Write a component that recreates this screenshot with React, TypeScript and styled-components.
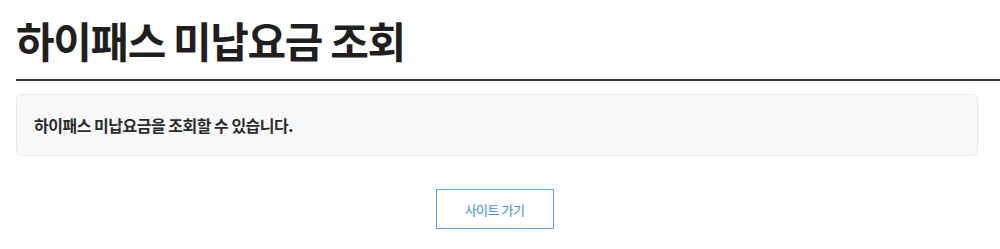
import React from "react";
import styled, { createGlobalStyle } from "styled-components";

const GlobalStyle = createGlobalStyle`
  html, body {
    margin: 0;
    padding: 0;
    background: #ffffff;
  }
  body {
    font-family: "Noto Sans CJK KR", "Noto Sans", sans-serif;
    color: #222;
  }
`;

const Page = styled.div`
  width: 1000px;
  height: 249px;
  box-sizing: border-box;
  padding: 14px 0 0 16px;
  display: flex;
  flex-direction: column;
  overflow: hidden;
`;

const Title = styled.h1`
  margin: 0;
  font-size: 42px;
  font-weight: 700;
  line-height: 52px;
  letter-spacing: -1.4px;
  color: #1f1f1f;
  padding-bottom: 13px;
  border-bottom: 2px solid #3a3a3a;
`;

const InfoBox = styled.div`
  margin: 13px 22px 0 0;
  height: 62px;
  box-sizing: border-box;
  background: #f7f8fa;
  border: 1px solid #e8eaed;
  border-radius: 5px;
  display: flex;
  align-items: center;
  padding: 0 17px;
`;

const InfoText = styled.p`
  margin: 0;
  font-size: 16px;
  font-weight: 700;
  letter-spacing: -0.5px;
  color: #2b2b2b;
`;

const Actions = styled.div`
  display: flex;
  justify-content: center;
  margin: 33px 27px 0 0;
`;

const SiteButton = styled.button`
  width: 118px;
  height: 40px;
  box-sizing: border-box;
  background: #ffffff;
  border: 1px solid #5aa7e6;
  border-radius: 0;
  color: #3b8fd8;
  font-family: "Noto Sans CJK KR", "Noto Sans", sans-serif;
  font-size: 13px;
  font-weight: 400;
  letter-spacing: -0.5px;
  cursor: pointer;
  padding: 0;
`;

export default function App() {
  return (
    <>
      <GlobalStyle />
      <Page>
        <Title>하이패스 미납요금 조회</Title>
        <InfoBox>
          <InfoText>하이패스 미납요금을 조회할 수 있습니다.</InfoText>
        </InfoBox>
        <Actions>
          <SiteButton type="button">사이트 가기</SiteButton>
        </Actions>
      </Page>
    </>
  );
}
